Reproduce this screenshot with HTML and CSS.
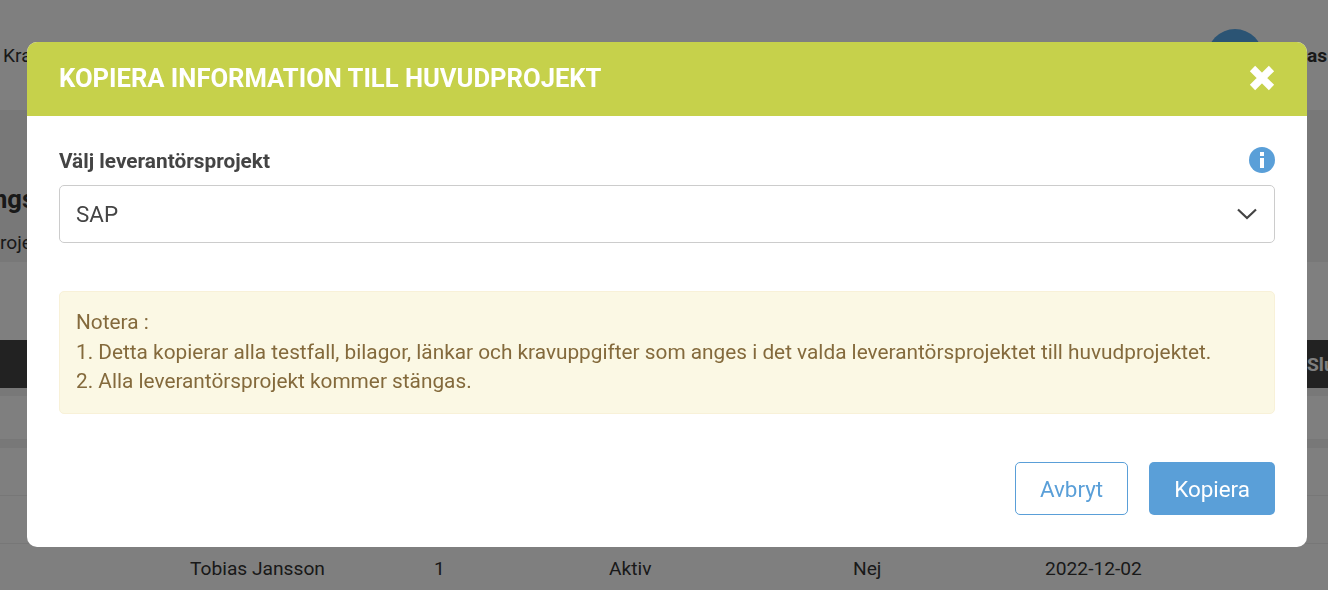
FILE: index.html
```html
<!DOCTYPE html>
<html lang="sv">
<head>
  <meta charset="UTF-8">
  <meta name="viewport" content="width=device-width, initial-scale=1.0">
  <title>Kopiera information till huvudprojekt</title>
  <link rel="stylesheet" href="styles.css">
</head>
<body>
  <div class="page">
    <header class="topbar">
      <span class="nav-link">Kra</span>
      <div class="user">
        <span class="avatar"></span>
        <span class="user-name">as</span>
      </div>
    </header>

    <section class="project-head">
      <h2>ngs</h2>
      <p>roje</p>
    </section>

    <div class="toolbar"></div>

    <div class="table-head">
      <span>Slu</span>
    </div>
    <div class="strip"></div>
    <div class="row row-short"></div>
    <div class="strip"></div>
    <div class="row"></div>
    <div class="row"></div>
    <div class="row row-data">
      <span>Tobias Jansson</span>
      <span>1</span>
      <span>Aktiv</span>
      <span>Nej</span>
      <span>2022-12-02</span>
    </div>
  </div>

  <div class="overlay">
    <div class="modal">
      <div class="modal-header">
        <h1>KOPIERA INFORMATION TILL HUVUDPROJEKT</h1>
        <svg class="close" width="26" height="26" viewBox="0 0 26 26">
          <path d="M3.5 3.5L22.5 22.5M22.5 3.5L3.5 22.5" stroke="#fff" stroke-width="7.5" fill="none"/>
        </svg>
      </div>

      <div class="modal-body">
        <div class="label-row">
          <label>Välj leverantörsprojekt</label>
          <svg width="26" height="26" viewBox="0 0 26 26">
            <circle cx="13" cy="13" r="13" fill="#5a9fd8"/>
            <rect x="11" y="5" width="4" height="4" fill="#fff"/>
            <rect x="11" y="11" width="4" height="10" fill="#fff"/>
          </svg>
        </div>

        <div class="select">
          <span>SAP</span>
          <svg width="20" height="12" viewBox="0 0 20 12">
            <path d="M1 1.5L10 10L19 1.5" stroke="#444" stroke-width="2.2" fill="none"/>
          </svg>
        </div>

        <div class="notice">
          Notera :<br>
          1. Detta kopierar alla testfall, bilagor, länkar och kravuppgifter som anges i det valda leverantörsprojektet till huvudprojektet.<br>
          2. Alla leverantörsprojekt kommer stängas.
        </div>

        <div class="actions">
          <button class="btn btn-outline">Avbryt</button>
          <button class="btn btn-primary">Kopiera</button>
        </div>
      </div>
    </div>
  </div>
</body>
</html>
```

FILE: styles.css
```css
* {
  box-sizing: border-box;
}

html, body {
  height: 590px;
}

body {
  margin: 0;
  font-family: 'Roboto', sans-serif;
  color: #333;
  background-color: #fff;
  overflow: hidden;
}

.page {
  display: flex;
  flex-direction: column;
}

.topbar {
  height: 110px;
  display: flex;
  justify-content: space-between;
  padding: 29px 0 0 3px;
  background-color: #fff;
}

.nav-link {
  font-size: 19.2px;
  line-height: 54px;
}

.user {
  display: flex;
  gap: 44px;
}

.avatar {
  width: 56px;
  height: 56px;
  border-radius: 50%;
  background-color: #56a8e8;
}

.user-name {
  width: 21px;
  font-size: 19.2px;
  font-weight: 700;
  line-height: 54px;
  white-space: nowrap;
  overflow: hidden;
}

.project-head {
  height: 152px;
  padding-top: 73px;
  background-color: #f0f0f0;
}

.project-head h2 {
  margin: 0 0 0 -7px;
  font-size: 25.6px;
  line-height: 32px;
  font-weight: 700;
}

.project-head p {
  margin: 16px 0 0;
  font-size: 19.2px;
  line-height: 24px;
}

.toolbar {
  height: 78px;
  background-color: #fff;
}

.table-head {
  height: 48px;
  display: flex;
  justify-content: flex-end;
  align-items: center;
  background-color: #444;
  color: #fff;
  font-size: 19.2px;
  font-weight: 700;
}

.table-head span {
  width: 21px;
  overflow: hidden;
}

.strip {
  height: 8px;
  background-color: #f0f0f0;
}

.row {
  height: 48px;
  border-bottom: 1px solid #eee;
  background-color: #fff;
}

.row-short {
  height: 44px;
}

.row-data {
  height: 47px;
  border-bottom: none;
  display: grid;
  grid-template-columns: 434px 175px 244px 192px 1fr;
  align-items: center;
  padding-top: 1px;
  font-size: 19.2px;
}

.row-data span:first-child {
  padding-left: 190px;
}

.overlay {
  position: fixed;
  inset: 0;
  padding: 42px 21px 0 27px;
  background-color: rgba(0, 0, 0, 0.5);
}

.modal {
  height: 505px;
  border-radius: 10px;
  overflow: hidden;
  background-color: #fff;
}

.modal-header {
  height: 74px;
  display: flex;
  justify-content: space-between;
  align-items: center;
  padding: 0 32px;
  background-color: #c6d14b;
}

.modal-header h1 {
  margin: -2px 0 0;
  color: #fff;
  font-size: 25.6px;
  font-weight: 700;
}

.close {
  margin-top: -2px;
}

.modal-body {
  padding: 31px 32px 0;
}

.label-row {
  height: 38px;
  display: flex;
  justify-content: space-between;
  align-items: flex-start;
}

.label-row label {
  font-size: 20.8px;
  font-weight: 700;
  line-height: 28px;
  color: #444;
}

.select {
  height: 58px;
  display: flex;
  justify-content: space-between;
  align-items: center;
  padding: 0 17px 0 16px;
  border: 1px solid #ccc;
  border-radius: 5px;
  font-size: 22.4px;
  color: #444;
}

.notice {
  margin-top: 48px;
  height: 123px;
  padding: 16px;
  border: 1px solid #f8f1d8;
  border-radius: 5px;
  background-color: #fbf8e4;
  color: #846a3c;
  font-size: 20.8px;
  line-height: 29.5px;
}

.actions {
  display: flex;
  justify-content: flex-end;
  gap: 21px;
  margin-top: 48px;
}

.btn {
  height: 53px;
  border-radius: 5px;
  font-family: inherit;
  font-size: 22.4px;
}

.btn-outline {
  width: 113px;
  border: 1px solid #5a9fd8;
  background-color: #fff;
  color: #5a9fd8;
}

.btn-primary {
  width: 126px;
  border: none;
  background-color: #5a9fd8;
  color: #fff;
}
```
